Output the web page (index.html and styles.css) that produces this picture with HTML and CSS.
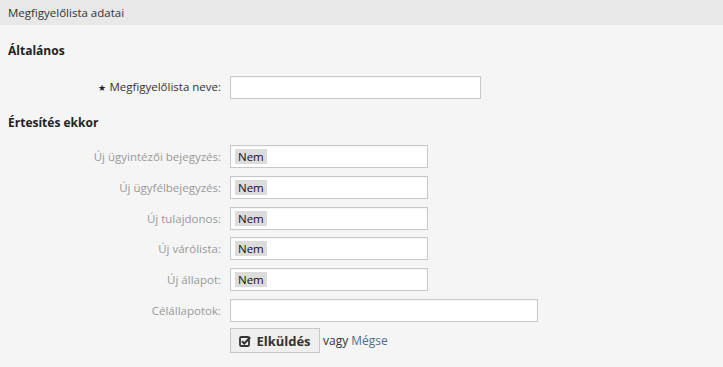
FILE: index.html
```html
<!DOCTYPE html>
<html lang="hu">
<head>
<meta charset="utf-8">
<link rel="stylesheet" href="styles.css">
</head>
<body>
<div class="header">Megfigyelőlista adatai</div>
<div class="content">
  <h2 class="section">Általános</h2>
  <div class="form">
    <label class="label required"><span class="star">★</span> Megfigyelőlista neve:</label>
    <div class="field"><div class="input w-name"></div></div>
  </div>
  <h2 class="section second">Értesítés ekkor</h2>
  <div class="form rows">
    <label class="label muted">Új ügyintézői bejegyzés:</label>
    <div class="field"><div class="input w-sel"><span class="tag">Nem</span></div></div>
    <label class="label muted">Új ügyfélbejegyzés:</label>
    <div class="field"><div class="input w-sel"><span class="tag">Nem</span></div></div>
    <label class="label muted">Új tulajdonos:</label>
    <div class="field"><div class="input w-sel"><span class="tag">Nem</span></div></div>
    <label class="label muted">Új várólista:</label>
    <div class="field"><div class="input w-sel"><span class="tag">Nem</span></div></div>
    <label class="label muted">Új állapot:</label>
    <div class="field"><div class="input w-sel"><span class="tag">Nem</span></div></div>
    <label class="label muted">Célállapotok:</label>
    <div class="field"><div class="input w-wide"></div></div>
    <div></div>
    <div class="field actions">
      <button class="btn"><svg class="ico" viewBox="0 0 12 12" width="12" height="12"><rect x="1" y="2" width="9" height="9" rx="1.3" fill="none" stroke="#333" stroke-width="1.8"/><path d="M3 6.2 L5.3 8.5 L11.2 2.3" fill="none" stroke="#333" stroke-width="2"/></svg>Elküldés</button>
      <span class="or">vagy <a class="link">Mégse</a></span>
    </div>
  </div>
</div>
</body>
</html>
```
FILE: styles.css
```css
html, body {
  margin: 0;
  padding: 0;
}
body {
  background: #f5f5f5;
  font-family: "Open Sans", "Noto Sans", sans-serif;
  font-size: 11.5px;
  color: #333;
  width: 723px;
  height: 367px;
  overflow: hidden;
}
.header {
  height: 25px;
  line-height: 25px;
  background: #e8e8e8;
  padding: 0 8px;
  font-size: 11.5px;
  color: #333;
}
.content {
  padding: 0 8px;
}
.section {
  margin: 0;
  font-size: 12px;
  font-weight: bold;
  color: #222;
  line-height: 16px;
  padding-top: 18px;
  padding-bottom: 16px;
}
.section.second {
  padding-top: 16px;
  padding-bottom: 14px;
}
.form {
  display: grid;
  grid-template-columns: 213px 1fr;
  column-gap: 9px;
  row-gap: 7.8px;
  align-items: center;
}
.label {
  text-align: right;
  line-height: 23px;
  white-space: nowrap;
}
.label.required { color: #333; }
.label.muted { color: #999; }
.star {
  font-size: 9px;
  color: #222;
}
.field {
  display: flex;
  align-items: center;
}
.input {
  box-sizing: border-box;
  height: 23px;
  background: #fff;
  border: 1px solid #c8c8c8;
  box-shadow: inset 0 1px 1px rgba(0,0,0,0.04);
  display: flex;
  align-items: center;
  padding-left: 4px;
}
.w-name { width: 251px; }
.w-sel { width: 198px; }
.w-wide { width: 308px; }
.tag {
  background: #dcdcdc;
  color: #111;
  font-size: 11.5px;
  line-height: 15px;
  padding: 0 3px;
}
.actions {
  margin-top: -1.5px;
}
.btn {
  box-sizing: border-box;
  width: 90px;
  height: 25px;
  background: #efefef;
  border: 1px solid #c8c8c8;
  font-family: inherit;
  font-size: 13px;
  font-weight: bold;
  color: #333;
  display: flex;
  align-items: center;
  justify-content: center;
  gap: 5px;
  padding: 0;
}
.or {
  margin-left: 3px;
  color: #333;
  font-size: 12px;
}
.link {
  color: #4c6d8e;
  text-decoration: none;
}
```
